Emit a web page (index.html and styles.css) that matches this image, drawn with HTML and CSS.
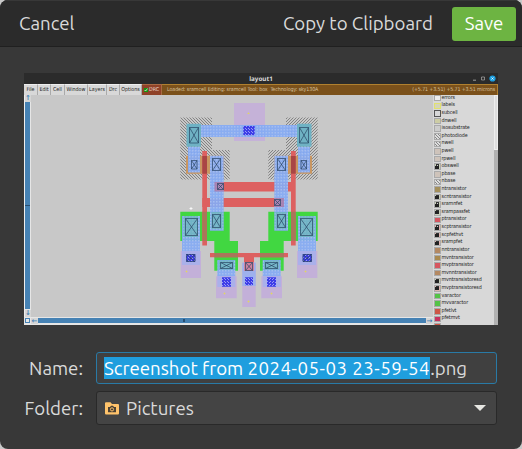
FILE: index.html
```html
<!DOCTYPE html>
<html lang="en">
<head>
<meta charset="utf-8">
<title>Save Screenshot</title>
<link rel="stylesheet" href="styles.css">
</head>
<body>
<main class="dialog">
  <header class="header">
    <button class="btn cancel">Cancel</button>
    <button class="btn copy">Copy to Clipboard</button>
    <button class="btn save">Save</button>
  </header>
  <section class="preview">
    <div class="titlebar"><span class="title">layout1</span>
      <svg class="controls" width="26" height="9" viewBox="0 0 26 9"><path d="M1 6.200h3" stroke="#bbb" stroke-width=".8"/><path d="M9.500 3h3v3h-3z" fill="none" stroke="#aaa" stroke-width=".7"/><circle cx="20.500" cy="4.500" r="3.100" fill="#1c9fe0"/><path d="M19.500 3.500l2 2m0-2l-2 2" stroke="#fff" stroke-width=".8"/></svg>
    </div>
    <div class="menubar">
      <span class="m1">File</span><span class="m2">Edit</span><span class="m3">Cell</span><span class="m4">Window</span><span class="m5">Layers</span><span class="m6">Drc</span><span class="m7">Options</span>
      <span class="drc"><svg width="4" height="4" viewBox="0 0 4 4"><path d="M0 0h4v4H0z" fill="#15940f"/><path d="M.6 2l1 1 2-2.500" fill="none" stroke="#fff" stroke-width=".7"/></svg>DRC</span>
      <span class="status"><b class="loaded">Loaded: sramcell Editing: sramcell Tool: box&nbsp; Technology: sky130A</b><b class="coords">(+5.71 +3.51) +5.71 +3.51 microns</b></span>
    </div>
    <div class="workspace">
      <div class="vscroll"><i class="arrow">↑</i><i class="track"><i class="mark"></i></i><i class="arrow">↓</i></div>
      <svg class="canvas" viewBox="31 95 402 222" width="402" height="222">
        <defs>
          <pattern id="well" width="3" height="3" patternUnits="userSpaceOnUse"><path d="M-1-1l5 5M-1 2l2 2M2-1l2 2" stroke="#7c7c7c" stroke-width=".9"/></pattern>
          <pattern id="metal" width="3" height="3" patternUnits="userSpaceOnUse"><path d="M0 0h3v3H0z" fill="#85abf5" fill-opacity=".92"/><path d="M0 0h1.500v1.500H0z" fill="#a4bdf0"/></pattern>
          <pattern id="via" width="3" height="3" patternUnits="userSpaceOnUse"><path d="M0 0h3v3H0z" fill="#3d3de8"/><path d="M0 0h1v1H0zM2 2h1v1H2z" fill="#9b9bf2"/></pattern>
          <g id="half">
            <path d="M180.300 117.500H212V150h17.700v29.600h-49.400z" fill="url(#well)"/>
            <path d="M186 155.700h38v18h-38z" fill="#c99661"/>
            <path d="M180.300 211.700h49.400V241H238v29.700h-23.700V241h-34z" fill="#41d741"/>
            <g fill="url(#metal)"><path d="M200.500 125h48.500v12h-48.500zM188 146.700h12v25.800h-12zM210 155.700h13.700v75H210z"/><path d="M182 216h18v35h-18zM217.300 260h18v17h-18z" /></g>
            <path d="M186.500 123.700H201v23h-14.500z" fill="#6fb2c4"/>
            <path d="M183.500 216h14.500v21h-14.500zM211.500 212h11v17h-11zM219 260.500h15v9h-15z" fill="#67b8b0" fill-opacity=".6"/>
            <path d="M180.700 251H201v27h-20.300zM216 276.300h20.700v22H216z" fill="#c3b0d9"/>
            <path d="M182 251h18v14h-18zM217.300 276.300h18v10.700h-18z" fill="#aab0ea"/>
            <path d="M186.300 254h9v7.700h-9zM222 277.300h9v9.400h-9z" fill="url(#via)"/>
            <path d="M202.300 151h4.700v94.500h-4.700z" fill="#dd6060"/>
            <path d="M202.300 156h4.700v17.700h-4.700z" fill="#a94545"/>
            <path d="M202.300 211.700h4.700V241h-4.700z" fill="#aa765a"/>
            <g class="contact"><path d="M189.500 127.500h9v15.500h-9zl9 15.500m0-15.500l-9 15.500M191.500 160.500h5.500v8.500h-5.500zl5.500 8.500m0-8.500l-5.500 8.500M212.500 158.500h8v12h-8zl8 12m0-12l-8 12M185.500 218.500h12v17h-12zl12 17m0-17l-12 17M212.500 214.500h8v13h-8zl8 13m0-13l-8 13M220.500 262.500h12v6h-12zl12 6m0-6l-12 6M186.500 254.500h8.500v7h-8.500zl8.500 7m0-7l-8.500 7"/></g>
          </g>
        </defs>
        <path d="M31 95h402v223H31z" fill="#c8c8c8"/>
        <path d="M234 103h31v38h-31z" fill="#c5b2d8"/>
        <path d="M214 182h81v9.500h-81zM202.300 198H284v9h-81.700z" fill="#dd6060"/>
        <use href="#half"/>
        <use href="#half" transform="matrix(-1 0 0 1 498 0)"/>
        <path d="M214.500 182h9.200v9.500h-9.200zM274.300 198h9.700v9h-9.700z" fill="#b56f96" fill-opacity=".65"/>
        <path d="M210 253h78v4.200h-34v13.800h-10v-13.800h-34z" fill="#dd6060"/>
        <path d="M214.300 253H238v4.200h-23.700zM260 253h24v4.200h-24z" fill="#aa765a"/>
        <path d="M242.300 262.700h13.400V307h-13.400z" fill="#c3b0d9"/>
        <path d="M242.300 262.700h13.400V286h-13.400z" fill="#9eb1ed"/>
        <path d="M244 262.700h10v8.300h-10z" fill="#ce829f"/>
        <path d="M243.300 126h11.400v9.300h-11.400zM245 277.300h8v8h-8z" fill="url(#via)"/>
        <g class="contact"><path d="M217.500 183.500h6v6h-6zl6 6m0-6l-6 6M274.500 199.500h6v6h-6zl6 6m0-6l-6 6M245.500 262.500h7v8h-7zl7 8m0-8l-7 8"/></g>
        <path d="M247.500 113.500h2m-1-1v1.500M185.500 271.500h2m-1-1v2M223.500 293.500h2m-1-1v2M247.500 301.500h2m-1-1v2M270.500 293.500h2m-1-1v2M304.500 271.500h2m-1-1v2" stroke="#e1d760" stroke-width=".8"/>
        <path d="M189.500 208.500h3m-1.500-1.500v3" stroke="#fff" stroke-width=".8"/>
      </svg>
      <ul class="layers">
        <li><i class="c-err"></i>errors</li><li><i class="c-lab"></i>labels</li><li><i class="c-sub"></i>subcell</li><li><i class="c-dn"></i>dnwell</li><li><i class="c-iso"></i>isosubstrate</li><li><i class="c-hatch"></i>photodiode</li><li><i class="c-hatch"></i>nwell</li><li><i class="c-pw"></i>pwell</li><li><i class="c-pw"></i>rpwell</li><li><i class="lock"></i>obswell</li><li><i class="c-pw"></i>pbase</li><li><i class="c-hatch"></i>nbase</li><li><i class="c-nt"></i>ntransistor</li><li><i class="lock"></i>scntransistor</li><li><i class="lock"></i>sramnfet</li><li><i class="lock"></i>srampassfet</li><li><i class="c-pt"></i>ptransistor</li><li><i class="lock pink"></i>scptransistor</li><li><i class="lock pink"></i>scpfethvt</li><li><i class="lock pink"></i>srampfet</li><li><i class="c-nn"></i>nntransistor</li><li><i class="c-mvn"></i>mvntransistor</li><li><i class="c-pt"></i>mvptransistor</li><li><i class="c-nn"></i>mvnntransistor</li><li><i class="lock"></i>mvntransistoresd</li><li><i class="lock pink"></i>mvptransistoresd</li><li><i class="c-var"></i>varactor</li><li><i class="c-var"></i>mvvaractor</li><li><i class="c-lvt"></i>pfetlvt</li><li><i class="c-mvt"></i>pfetmvt</li><li><i class="c-lvt"></i></li>
      </ul>
      <div class="sidebar"><i class="thumb"></i></div>
      <div class="hscroll"><i class="corner"></i><i class="arrow">←</i><i class="htrack"><i class="hmark"></i></i><i class="arrow">→</i></div>
    </div>
  </section>
  <form class="form">
    <label class="label">Name:</label>
    <div class="entry"><span class="selected">Screenshot from <span class="stamp">2024-05-03 23-59-54</span></span><span class="ext">.png</span></div>
    <label class="label folder-label">Folder:</label>
    <div class="combo">
      <svg class="folder" width="14" height="13" viewBox="0 0 14 13"><path d="M0 1.200Q0 .2 1 .2h4.500L7 2h6q1 0 1 1v8.500q0 1-1 1H1q-1 0-1-1z" fill="#ffc36b"/><path d="M3 5h2l1-1.200h2L9 5h2v5.200H3z" fill="#4b4134"/><circle cx="7" cy="7.400" r="1.600" fill="#4b4134" stroke="#ffc36b" stroke-width="1"/></svg>
      <span class="place">Pictures</span>
      <svg class="caret" width="12" height="6" viewBox="0 0 12 6"><path d="M0 0h12L6 6z" fill="#e6e6e2"/></svg>
    </div>
  </form>
</main>
</body>
</html>
```
FILE: styles.css
```css
* { box-sizing: border-box; }
body { margin: 0; background: #c9c9c9; font: 18.670px/24px Ubuntu, "Noto Sans", sans-serif; color: #dadada; }
i { font-style: normal; }
.dialog { width: 522px; height: 449px; background: #383838; border-radius: 8px; overflow: hidden; }
.header { height: 47px; display: flex; align-items: center; padding: 0 6px 0 19px; background: #2b2b2b; border-top: 1px solid #383838; border-bottom: 1px solid #202020; }
.btn { border: 0; padding: 0; background: none; color: inherit; font: inherit; white-space: nowrap; }
.copy { margin-left: auto; margin-right: 19px; }
.save { width: 64px; height: 34px; border-radius: 3px; background: #6db442; color: #fff; }
.preview { width: 474px; height: 252px; margin: 26px 0 0 24px; overflow: hidden; background: #c8c8c8; font: 5.300px/7px "DejaVu Sans Condensed", "DejaVu Sans", sans-serif; color: #222; text-rendering: geometricPrecision; }
.titlebar { height: 11px; display: grid; grid-template-columns: 1fr auto 1fr; align-items: center; background: #2b2b2b; color: #ddd; font: bold 6.300px/10px "Noto Sans", sans-serif; }
.title { grid-column: 2; }
.controls { justify-self: end; }
.menubar { height: 11px; display: flex; background: #d8d8d8; line-height: 10px; white-space: nowrap; }
.menubar > span { border-right: 1px solid #aaa; text-align: center; border-top: 1px solid #eee; }
.m1 { width: 14px; } .m2 { width: 13px; } .m3 { width: 14px; } .m4 { width: 23px; } .m5 { width: 19px; } .m6 { width: 13px; } .m7 { width: 22px; }
.menubar .drc { width: 20px; background: #8f4228; color: #eadbd2; border-color: #a86a44; display: flex; gap: 1px; align-items: center; justify-content: center; }
.menubar .status { flex: 1; display: flex; justify-content: space-between; padding: 0 2px 0 5px; background: #7b511b; color: #d5c09d; border-color: #b0802f; }
.status b { font-weight: normal; }
.loaded { letter-spacing: -.09px; }
.coords { letter-spacing: -.13px; }
.workspace { height: 230px; display: grid; grid-template: 222px 8px / 7px 402px 61px 4px; }
.vscroll { display: flex; flex-direction: column; background: #e6e6e6; border-left: 1px solid #eee; }
.arrow { flex: 0 0 7px; text-align: center; color: #4682b4; font: bold 7px/7px "DejaVu Sans", sans-serif; background: #d5d5d5; }
.hscroll .arrow { line-height: 6px; }
.track { flex: 1; margin: 0 1px 1px 0; background: #4682b4; display: flex; align-items: center; }
.mark { width: 5px; height: 1px; background: #294e70; }
.canvas { display: block; height: 222px; }
.contact { fill: none; stroke: #254160; stroke-width: .8; stroke-opacity: .85; }
.layers { grid-row: 1 / 3; grid-column: 3; height: 230px; list-style: none; margin: 0; padding: 0 0 0 1px; background: #d8d8d8; overflow: hidden; letter-spacing: -.09px; }
.layers li { height: 7.615px; display: flex; align-items: center; gap: 1px; line-height: 7px; white-space: nowrap; }
.layers li:first-child { margin-top: -.6px; }
.layers i { width: 6.500px; height: 6.500px; flex: none; border: .5px solid #aaa; }
.c-err { background: #ececec; } .c-lab { background: #d5d5b8; outline: 1px solid #e1e16f; outline-offset: -1px; } .c-sub { outline: 1px solid #555; outline-offset: -1px; }
.c-dn { background: #cdcda5; } .c-iso { background: #ccc; } .c-pw { background: #cec3ba; } .c-nt { background: #a4905c; } .c-pt { background: #d65660; }
.c-hatch { background: repeating-linear-gradient(45deg, #ddd 0 1.200px, #888 1.200px 2px); }
.c-nn { background: #b48963; } .c-mvn { background: #aa8a50; } .c-var { background: #54c247; } .c-lvt { background: #cd5646; } .c-mvt { background: #c8325f; }
.lock { background: linear-gradient(#222, #222) 50% 80% / 4px 3px no-repeat, radial-gradient(circle at 50% 40%, #ccc 0 1px, #333 1px 2px, transparent 2px), #c7ceb9; }
.lock.pink { background-color: #dfb3b0; }
.sidebar { grid-row: 1 / 3; grid-column: 4; background: #b1b1b1; }
.thumb { display: block; height: 55px; background: #dedede; border: 1px solid #eee; }
.hscroll { grid-row: 2; grid-column: 1 / 3; display: flex; background: #e6e6e6; padding: 1px 0 1px 1px; }
.corner { width: 5px; height: 5px; margin-right: 1px; border: 1px solid #4682b4; }
.htrack { flex: 1; height: 5px; background: #4682b4; display: flex; justify-content: center; align-items: center; padding-right: 96px; }
.hmark { width: 2px; height: 3px; background: #294e70; }
.form { display: grid; grid-template-columns: 83px 401px; column-gap: 13px; row-gap: 7px; margin-top: 27px; }
.label { text-align: right; line-height: 34px; height: 32px; }
.folder-label { line-height: 35px; }
.entry { height: 32px; display: flex; align-items: center; padding-left: 7px; background: #404040; border: 1px solid #297aa6; border-radius: 3px; white-space: nowrap; }
.selected { height: 22px; line-height: 24px; background: #1f9ede; color: #fff; }
.ext { padding-top: 2px; }
.stamp { letter-spacing: .5px; }
.combo { height: 34px; display: flex; align-items: center; padding: 0 10px 0 8px; background: #444; border: 1px solid #292929; border-radius: 3px; }
.place { margin-left: 7px; padding-top: 1px; }
.caret { margin-left: auto; }
```
